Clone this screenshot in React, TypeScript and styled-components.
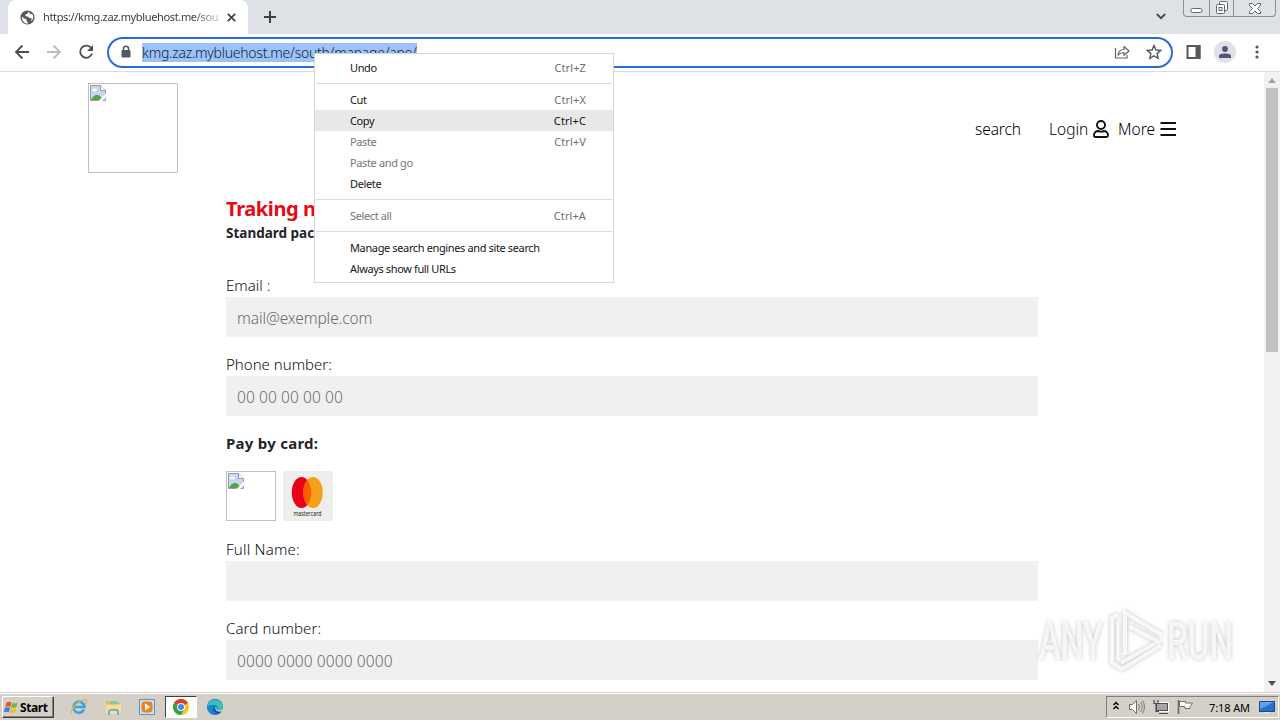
import React from 'react'
import styled, { createGlobalStyle } from 'styled-components'

const GlobalStyle = createGlobalStyle`
  * { box-sizing: border-box; }
  body {
    margin: 0;
    overflow: hidden;
    font-family: 'Noto Sans', 'Open Sans', sans-serif;
  }
  svg { display: block; flex: none; }
`

const uiFont = `'Noto Sans', 'DejaVu Sans', sans-serif`

const Screen = styled.div`
  position: relative;
  display: flex;
  flex-direction: column;
  width: 1280px;
  height: 720px;
  overflow: hidden;
  background: #fff;
`

const Text = styled.span<{ $spacing?: number }>`
  letter-spacing: ${({ $spacing = 0 }) => $spacing}px;
  white-space: nowrap;
`

/* Tab strip */

const TabStrip = styled.div`
  display: flex;
  align-items: flex-start;
  height: 34px;
  padding-left: 8px;
  background: #dee1e6;
`

const Tab = styled.div`
  display: flex;
  align-items: center;
  width: 240px;
  height: 34px;
  padding: 0 12px 0 12px;
  border-radius: 8px 8px 0 0;
  background: #fff;
`

const TabTitle = styled.div`
  flex: 1;
  margin: 0 6px 0 8px;
  overflow: hidden;
  color: #3c4043;
  font-family: ${uiFont};
  font-size: 11px;
  line-height: 18px;
  mask-image: linear-gradient(to right, #000 84%, transparent 104%);
`

const NewTab = styled.div`
  padding: 11px 0 0 16px;
`

const TabSearch = styled.div`
  margin-left: auto;
  padding: 13px 17px 0 0;
`

const WindowButtons = styled.div`
  display: flex;
  width: 93px;
  height: 17px;
  margin-right: 4px;
  border: 1px solid #8b8f96;
  border-top: 0;
  border-radius: 0 0 4px 4px;
`

const WindowButton = styled.div<{ $width: number }>`
  display: flex;
  align-items: center;
  justify-content: center;
  width: ${({ $width }) => $width}px;
  & + & { border-left: 1px solid #8b8f96; }
`

/* Toolbar */

const Toolbar = styled.div`
  display: flex;
  align-items: center;
  height: 38px;
  padding: 0 14px 1px 14px;
  border-bottom: 1px solid #dadce0;
`

const NavButtons = styled.div`
  display: flex;
  gap: 16px;
  margin-right: 13px;
`

const Omnibox = styled.div`
  display: flex;
  flex: none;
  align-items: center;
  width: 1066px;
  height: 31px;
  padding: 0 9px 0 11px;
  border: 2px solid #2a6bdb;
  border-radius: 16px;
`

const Url = styled.div`
  margin: 0 auto 0 10px;
  background: #9cc2f8;
  color: #0c1f3d;
  font-family: ${uiFont};
  font-size: 14px;
  font-weight: 300;
  line-height: 19px;
`

const OmniboxActions = styled.div`
  display: flex;
  align-items: center;
  gap: 16px;
`

const ToolbarActions = styled.div`
  display: flex;
  align-items: center;
  margin-left: 13px;
`

const Avatar = styled.div`
  display: flex;
  align-items: center;
  justify-content: center;
  width: 22px;
  height: 22px;
  margin: 0 13px 0 13px;
  border-radius: 50%;
  background: #dfe1e6;
`

/* Page */

const Viewport = styled.div`
  display: flex;
  height: 620px;
`

const Page = styled.main`
  flex: 1;
  overflow: hidden;
`

const Header = styled.header`
  display: flex;
  align-items: flex-start;
  height: 125px;
  padding: 11px 88px 0;
`

const Nav = styled.nav`
  display: flex;
  align-items: center;
  height: 24px;
  margin: 34px 0 0 auto;
  color: #000;
  font-size: 15.5px;
  font-weight: 300;
`

const NavItem = styled.div<{ $width: number; $after: number }>`
  display: flex;
  align-items: center;
  justify-content: space-between;
  width: ${({ $width }) => $width}px;
  margin-right: ${({ $after }) => $after}px;
`

const MissingImage = styled.div<{ $size: number }>`
  width: ${({ $size }) => $size}px;
  height: ${({ $size }) => $size}px;
  padding: 1px;
  border: 1px solid #c0c0c0;
`

const Form = styled.form`
  width: 812px;
  margin-left: 226px;
`

const Title = styled.h1`
  margin: 0;
  color: #e60a14;
  font-size: 20px;
  font-weight: 700;
  line-height: 24px;
`

const Subtitle = styled.h2`
  margin: 0 0 28px;
  color: #212529;
  font-size: 13.5px;
  font-weight: 700;
  line-height: 24px;
`

const Field = styled.div`
  margin-bottom: 15px;
`

const Label = styled.label`
  display: block;
  height: 24px;
  color: #0c0f12;
  font-size: 15px;
  font-weight: 300;
  line-height: 24px;
`

const Input = styled.div`
  height: 40px;
  padding-left: 11px;
  background: #f0f0f0;
  color: #6c6c6c;
  font-size: 15.5px;
  font-weight: 300;
  line-height: 42px;
`

const PayTitle = styled.h3`
  margin: 0 0 16px;
  color: #212529;
  font-size: 15px;
  font-weight: 700;
  line-height: 24px;
`

const Cards = styled.div`
  display: flex;
  gap: 7px;
  margin-bottom: 16px;
`

const Scrollbar = styled.div`
  display: flex;
  flex-direction: column;
  align-items: center;
  width: 16px;
  height: 620px;
  padding: 6px 0;
  background: #f1f1f1;
`

const Thumb = styled.div`
  width: 12px;
  height: 264px;
  margin: 5px 0 auto;
  background: #c1c1c1;
`

/* Context menu */

const Menu = styled.div`
  position: absolute;
  left: 314px;
  top: 53px;
  width: 300px;
  height: 230px;
  padding: 3px 0;
  border: 1px solid #d5d5d5;
  background: #fff;
  font-family: ${uiFont};
  font-size: 11px;
`

const MenuRow = styled.div<{ $active?: boolean; $disabled?: boolean }>`
  display: flex;
  align-items: center;
  justify-content: space-between;
  height: 21px;
  padding: 0 27px 0 35px;
  background: ${({ $active }) => $active ? '#e8e8e8' : 'transparent'};
  color: ${({ $disabled }) => $disabled ? '#757575' : '#151515'};
`

const Shortcut = styled(Text)<{ $active?: boolean }>`
  color: ${({ $active }) => $active ? '#151515' : '#6d6d6d'};
`

const Separator = styled.hr`
  height: 1px;
  margin: 5px 1px;
  border: 0;
  background: #dadada;
`

/* Taskbar */

const Taskbar = styled.footer`
  display: flex;
  align-items: center;
  height: 28px;
  padding: 1px 1px 0 2px;
  border-top: 1px solid #d4d0c8;
  background: #d4d0c8;
  box-shadow: inset 0 1px 0 #fff;
  font-family: ${uiFont};
`

const StartButton = styled.div`
  display: flex;
  align-items: center;
  gap: 1px;
  width: 52px;
  height: 22px;
  padding-left: 1px;
  border: 1px solid;
  border-color: #fff #404040 #404040 #fff;
  box-shadow: inset -1px -1px 0 #808080;
  color: #000;
  font-size: 12px;
  font-weight: 700;
`

const TaskIcon = styled.div<{ $active?: boolean }>`
  display: flex;
  align-items: center;
  justify-content: center;
  width: 32px;
  height: 22px;
  margin-left: 2px;
  border: 1px solid;
  border-color: ${({ $active }) => $active ? '#404040 #fff #fff #404040' : 'transparent'};
  background: ${({ $active }) => $active ? '#fff' : 'transparent'};
`

const QuickLaunch = styled.div`
  display: flex;
  margin-left: 7px;
`

const Tray = styled.div`
  display: flex;
  align-items: center;
  width: 173px;
  height: 22px;
  margin-left: auto;
  padding-left: 6px;
  border: 1px solid;
  border-color: #808080 #fff #fff #808080;
  color: #000;
  font-size: 11px;
`

const TrayIcons = styled.svg`
  width: 80px;
  height: 18px;
`

const Clock = styled.div`
  margin: 0 9px 0 16px;
`

const Watermark = styled.svg`
  position: absolute;
  left: 1030px;
  top: 602px;
  filter: drop-shadow(0 0 2px rgba(0, 0, 0, 0.3));
`

const BrokenImageIcon = () => (
  <svg width="16" height="16" viewBox="0 0 16 16">
    <path d="M.5.5h10l5 5v10H.5z" fill="#c5d7f2" stroke="#9a9da3" />
    <path d="M10.5.5v5h5" fill="#fff" stroke="#9a9da3" />
    <ellipse cx="4.5" cy="5" rx="2.5" ry="1.4" fill="#fff" />
    <path d="M1 15c2-5 6-6 9-4l3 4z" fill="#53a443" />
    <path d="M16 8.500 8.500 16H12l4-4z" fill="#fff" />
  </svg>
)

const MastercardIcon = () => (
  <svg width="50" height="50" viewBox="0 0 50 50">
    <rect width="50" height="50" rx="2" fill="#f0eeea" />
    <ellipse cx="18.5" cy="21.5" rx="9.7" ry="15.5" fill="#eb001b" />
    <ellipse cx="30" cy="21.5" rx="9.7" ry="15.5" fill="#f79e1b" />
    <path d="M24.3 9a9.7 15.5 0 0 1 0 25a9.7 15.5 0 0 1 0-25z" fill="#ff5f00" />
    <text x="10.500" y="44.500" textLength="28" lengthAdjust="spacingAndGlyphs" fontSize="7.500" fontWeight="500" fontFamily="Open Sans, sans-serif" fill="#111">mastercard</text>
  </svg>
)

const GlobeIcon = () => (
  <svg width="15" height="15" viewBox="0 0 16 16">
    <circle cx="8" cy="8" r="7.5" fill="#53575b" />
    <path d="M2.2 7.2 5 9.2l1.8.4.2 2 1.3 1.1-.1 2C4.5 14.4 2 11.7 2 8zM9 1.6 8.2 3.8 6 4.4 5.6 6.6 8.4 7l1.4 1.6 2.6.2-.6 3.4C14.6 10 14.9 6.5 12.8 4l-2 .6-.4-1.5z" fill="#fff" />
  </svg>
)

const ChromeIcon = () => (
  <svg width="16" height="16" viewBox="0 0 16 16">
    <circle cx="8" cy="8" r="8" fill="#fbc116" />
    <path d="M8 8 1.07 4A8 8 0 0 1 14.93 4z" fill="#e33b2e" />
    <path d="M8 8 1.07 4A8 8 0 0 0 8 16l3.5-6z" fill="#2da24c" />
    <circle cx="8" cy="8" r="4" fill="#fff" />
    <circle cx="8" cy="8" r="3" fill="#4285f4" />
  </svg>
)

const ExplorerIcon = () => (
  <svg width="18" height="18" viewBox="0 0 18 18" fill="none">
    <path d="M14 11.5A5.5 5.5 0 1 1 14.5 9H5" stroke="#39a3df" strokeWidth="2.6" />
    <path d="M2 15.5C-1 12 10 1 15.5 2c2 .5 1 3 0 4" stroke="#e7b53c" strokeWidth="1.3" />
  </svg>
)

const FolderIcon = () => (
  <svg width="17" height="17" viewBox="0 0 17 17">
    <path d="M1 2h5l1 1.5h8V14H1z" fill="#e3bd5c" />
    <path d="M5 2h8v4H5z" fill="#8cc9a0" />
    <path d="M1 5.500h15V15H1z" fill="#f5df90" />
    <path d="M4 16v-3.500c0-2.500 9-2.500 9 0V16" fill="none" stroke="#69aedb" strokeWidth="2" />
  </svg>
)

const PlayerIcon = () => (
  <svg width="16" height="16" viewBox="0 0 16 16">
    <rect x=".5" y=".5" width="15" height="15" fill="#c9e2f6" stroke="#5e93c4" />
    <rect x="2.500" y="2.500" width="11" height="11" rx="3" fill="#f08019" />
    <path d="M6 4.500v7L11.500 8z" fill="#fff" />
  </svg>
)

const EdgeIcon = () => (
  <svg width="16" height="16" viewBox="0 0 16 16">
    <circle cx="8" cy="8" r="8" fill="#1673c8" />
    <path d="M.2 7A8 8 0 0 1 16 8c0 3-3 4-6 3 2-2 0-5-3-5-3.500 0-6 2-6.800 1z" fill="#38c1b4" />
    <path d="M7 6.500c-3 2-2 7 2 8.500-5 1-9-3-8.800-7C2 5.500 5 5 7 6.500z" fill="#1588d8" />
    <path d="M8 8c-1 3 3 5 7 3.500-1 1.500-2 2.500-3.500 3C8 14 5.500 10.500 8 8z" fill="#144f96" />
    <path d="M8.500 8c1 0 1.500 1 1 2.500 1.500 1.300 4.500 1 6.500-.5l-.5 2c-3 1.500-8 .5-7-4z" fill="#d4d0c8" />
  </svg>
)

const StartIcon = () => (
  <svg width="15" height="15" viewBox="0 0 15 15">
    <path d="M2.5 2.5q2.5-1.500 5 0l-1.200 4.500q-2.500-1.300-5 0z" fill="#e4572a" />
    <path d="M8.200 3q2.500 1.200 5.500-.5l-1.300 4.500q-2.700 1.500-5.300.3z" fill="#79b530" />
    <path d="M1 7.800q2.500-1.300 5 0L4.800 12.300q-2.500-1.300-5 0z" fill="#3f7fd6" />
    <path d="M6.800 8.200q2.600 1.200 5.400-.3L10.900 12.400q-2.600 1.500-5.300.2z" fill="#f5bd2a" />
  </svg>
)

const menuItems = [
  { label: 'Undo', keys: 'Ctrl+Z' },
  null,
  { label: 'Cut', keys: 'Ctrl+X' },
  { label: 'Copy', keys: 'Ctrl+C', active: true },
  { label: 'Paste', keys: 'Ctrl+V', disabled: true },
  { label: 'Paste and go', disabled: true },
  { label: 'Delete' },
  null,
  { label: 'Select all', keys: 'Ctrl+A', disabled: true },
  null,
  { label: 'Manage search engines and site search' },
  { label: 'Always show full URLs' },
]

interface FormFieldProps {
  label: string
  placeholder?: string
  spacing?: number
  hintSpacing?: number
}

const FormField: React.FC<FormFieldProps> = ({ label, placeholder, spacing, hintSpacing }: FormFieldProps) => (
  <Field>
    <Label><Text $spacing={spacing}>{label}</Text></Label>
    <Input><Text $spacing={hintSpacing}>{placeholder}</Text></Input>
  </Field>
)

const BrowserTabs = () => (
  <TabStrip>
    <Tab>
      <GlobeIcon />
      <TabTitle><Text $spacing={-0.35}>https://kmg.zaz.mybluehost.me/sou</Text></TabTitle>
      <svg width="9" height="9" viewBox="0 0 9 9"><path d="m.8.8 7.400 7.400m0-7.400L.8 8.200" stroke="#3c4043" strokeWidth="1.7" /></svg>
    </Tab>
    <NewTab>
      <svg width="12" height="12" viewBox="0 0 12 12"><path d="M6 0v12M0 6h12" stroke="#3c4043" strokeWidth="2" /></svg>
    </NewTab>
    <TabSearch>
      <svg width="10" height="7" viewBox="0 0 10 7" fill="none"><path d="m.8 1 4.200 4.200L9.200 1" stroke="#45494d" strokeWidth="1.8" /></svg>
    </TabSearch>
    <WindowButtons>
      <WindowButton $width={25}>
        <svg width="13" height="16" viewBox="0 0 13 16"><rect x="1" y="8.5" width="11" height="4" rx="1.5" fill="#fff" stroke="#62666d" /></svg>
      </WindowButton>
      <WindowButton $width={25}>
        <svg width="14" height="14" viewBox="0 0 14 14" fill="#fff" stroke="#62666d">
          <rect x="4.5" y=".5" width="8" height="9" rx="1" />
          <rect x="1.5" y="3.5" width="8" height="9" rx="1" />
          <rect x="4" y="6.5" width="3" height="3" />
        </svg>
      </WindowButton>
      <WindowButton $width={42}>
        <svg width="12" height="11" viewBox="0 0 12 11"><path d="M.5.5h3L6 3 8.500.5h3v2l-3 3 3 3v2h-3L6 8 3.500 10.500h-3v-2l3-3-3-3z" fill="#fff" stroke="#62666d" /></svg>
      </WindowButton>
    </WindowButtons>
  </TabStrip>
)

const BrowserToolbar = () => (
  <Toolbar>
    <NavButtons>
      <svg width="16" height="16" viewBox="0 0 16 16" fill="none"><path d="M15 8H2m6.500-6.500L2 8l6.500 6.500" stroke="#4b4f53" strokeWidth="1.8" /></svg>
      <svg width="16" height="16" viewBox="0 0 16 16" fill="none"><path d="M1 8h13M7.500 1.500 14 8l-6.500 6.500" stroke="#b9bbbe" strokeWidth="1.8" /></svg>
      <svg width="16" height="16" viewBox="0 0 16 16" fill="none">
        <path d="M13.500 4.500A6.100 6.100 0 1 0 14.100 9.500" stroke="#4b4f53" strokeWidth="1.8" />
        <path d="M15 1v6H9z" fill="#4b4f53" />
      </svg>
    </NavButtons>
    <Omnibox>
      <svg width="12" height="14" viewBox="0 0 12 14"><path d="M3.500 6V3.800a2.500 2.500 0 0 1 5 0V6" fill="none" stroke="#54585c" strokeWidth="1.5" /><rect x="1.5" y="5" width="9" height="7.5" rx="1" fill="#54585c" /></svg>
      <Url><Text $spacing={-0.26}>kmg.zaz.mybluehost.me/south/manage/ape/</Text></Url>
      <OmniboxActions>
        <svg width="16" height="16" viewBox="0 0 16 16" fill="none" stroke="#606468" strokeWidth="1.2">
          <path d="M1.500 4v10h11.500v-3" />
          <path d="M4 11c.5-4 2.500-5.500 6-5.500V2.500l5 4.500-5 4.300V8.500C7.500 8.500 5.500 9.300 4 11z" strokeLinejoin="round" />
        </svg>
        <svg width="16" height="16" viewBox="0 0 16 16" fill="none"><path d="m8 1.500 1.900 4.500 4.900.4-3.700 3.200 1.100 4.800L8 11.900l-4.200 2.500 1.100-4.800L1.200 6.400 6.100 6z" stroke="#54585c" strokeWidth="1.4" /></svg>
      </OmniboxActions>
    </Omnibox>
    <ToolbarActions>
      <svg width="15" height="14" viewBox="0 0 15 14"><path d="M1.500 1h12v12h-12z" fill="#fff" stroke="#54585c" strokeWidth="2" /><path d="M9.500 0h5v14h-5z" fill="#54585c" /></svg>
      <Avatar>
        <svg width="12" height="12" viewBox="0 0 12 12" fill="#4c5877"><circle cx="6" cy="3" r="2.9" /><path d="M0 12V9.800C0 6.600 12 6.600 12 9.800V12z" /></svg>
      </Avatar>
      <svg width="16" height="14" viewBox="0 0 16 14" fill="#54585c"><circle cx="8" cy="2" r="1.6" /><circle cx="8" cy="7" r="1.6" /><circle cx="8" cy="12" r="1.6" /></svg>
    </ToolbarActions>
  </Toolbar>
)

const ContextMenu = () => (
  <Menu>
    {menuItems.map((item, i) => item ? (
      <MenuRow key={i} $active={item.active} $disabled={item.disabled}>
        <Text $spacing={-0.37}>{item.label}</Text>
        {item.keys && <Shortcut $active={item.active} $spacing={0.1}>{item.keys}</Shortcut>}
      </MenuRow>
    ) : <Separator key={i} />)}
  </Menu>
)

const SystemTaskbar = () => (
  <Taskbar>
    <StartButton><StartIcon /><Text $spacing={-0.4}>Start</Text></StartButton>
    <QuickLaunch>
      <TaskIcon><ExplorerIcon /></TaskIcon>
      <TaskIcon><FolderIcon /></TaskIcon>
      <TaskIcon><PlayerIcon /></TaskIcon>
      <TaskIcon $active><ChromeIcon /></TaskIcon>
      <TaskIcon><EdgeIcon /></TaskIcon>
    </QuickLaunch>
    <Tray>
      <TrayIcons viewBox="0 0 80 18">
        <path d="m.5 7 2.500-2.500L5.500 7m-5 4L3 8.500 5.500 11" fill="none" stroke="#000" strokeWidth="1.4" />
        <path d="M16.500 6.500h3l4-4v13l-4-4h-3z" fill="#fff" stroke="#6f6f6f" />
        <path d="M25.500 6q2 3 0 6m2-8q3.500 5 0 10m2-11.500q4 6.500 0 13" fill="none" stroke="#7a7a7a" />
        <path d="M44.500 4.500h11v9h-11z" fill="#b5b5b5" stroke="#fff" />
        <path d="M43.500 5.500h11v7h-11z" fill="#a5a5a5" stroke="#4d4d4d" />
        <path d="M46 15.500h9M41 2v3.500h4V2m-2 4v7.500h3" fill="none" stroke="#4d4d4d" strokeWidth="1.2" />
        <path d="M65.500 2v14" stroke="#666" strokeWidth="1.6" />
        <path d="M66.500 3.500h6v1.500h7l-2.500 3.500v2h-5v-2h-5.500z" fill="#fff" stroke="#6f6f6f" />
      </TrayIcons>
      <Clock><Text $spacing={-0.1}>7:18 AM</Text></Clock>
      <svg width="16" height="14" viewBox="0 0 16 14">
        <path d="M.5 1.500h15v10H.5z" fill="#2d6fc4" stroke="#174a8f" />
        <path d="M1 2h14L1 9z" fill="#5fa3e6" />
        <path d="M5 12h6v1.500H5z" fill="#dce7f3" />
      </svg>
    </Tray>
  </Taskbar>
)

const App: React.FC = () => (
  <Screen>
    <GlobalStyle />
    <BrowserTabs />
    <BrowserToolbar />
    <Viewport>
      <Page>
        <Header>
          <MissingImage $size={90}><BrokenImageIcon /></MissingImage>
          <Nav>
            <NavItem $width={45} $after={29}><Text $spacing={-0.1}>search</Text></NavItem>
            <NavItem $width={60} $after={9}>
              <Text>Login</Text>
              <svg width="16" height="18" viewBox="0 0 16 18" fill="none" stroke="#111" strokeWidth="1.9"><circle cx="8" cy="5" r="4" /><path d="M1 15.500c0-3 2-4.500 4-4.500 2 .8 4 .8 6 0 2 0 4 1.500 4 4.500 0 1-.5 1.500-1.500 1.500h-11C1.500 17 1 16.500 1 15.500z" /></svg>
            </NavItem>
            <NavItem $width={58} $after={0}>
              <Text>More</Text>
              <svg width="16" height="14" viewBox="0 0 16 14"><path d="M.5 1H16M.5 7H16M.5 13H16" stroke="#111" strokeWidth="2" /></svg>
            </NavItem>
          </Nav>
        </Header>
        <Form>
          <Title><Text $spacing={-0.4}>Traking n</Text></Title>
          <Subtitle><Text>Standard pac</Text></Subtitle>
          <FormField label="Email :" placeholder="mail@exemple.com" hintSpacing={-0.1} />
          <FormField label="Phone number:" placeholder="00 00 00 00 00" hintSpacing={0.1} />
          <PayTitle><Text $spacing={0.25}>Pay by card:</Text></PayTitle>
          <Cards>
            <MissingImage $size={50}><BrokenImageIcon /></MissingImage>
            <MastercardIcon />
          </Cards>
          <FormField label="Full Name:" spacing={0.22} />
          <FormField label="Card number:" placeholder="0000 0000 0000 0000" spacing={0.1} hintSpacing={0.1} />
        </Form>
      </Page>
      <Scrollbar>
        <svg width="8" height="5" viewBox="0 0 8 5"><path d="M0 5 4 0l4 5z" fill="#a3a3a3" /></svg>
        <Thumb />
        <svg width="8" height="5" viewBox="0 0 8 5"><path d="m0 0 4 5 4-5z" fill="#505050" /></svg>
      </Scrollbar>
    </Viewport>
    <SystemTaskbar />
    <ContextMenu />
    <Watermark width="240" height="80" viewBox="0 0 240 80">
      <g fill="#fff" fillOpacity=".75" fontFamily="Roboto, sans-serif" fontSize="51" fontWeight="500">
        <text x="9" y="57" textLength="64" lengthAdjust="spacingAndGlyphs">ANY</text>
        <text x="137" y="57" textLength="66" lengthAdjust="spacingAndGlyphs">RUN</text>
      </g>
      <g fill="none" stroke="#fff" strokeOpacity=".8" strokeWidth="4">
        <path d="M95 53V11l37 22" />
        <path d="M99 24l29 16-37 21" />
        <path d="M88 12l-6 4v45l10 6 39-24" />
        <path d="M88 20v37" strokeWidth="2" />
      </g>
    </Watermark>
  </Screen>
)

export default App
